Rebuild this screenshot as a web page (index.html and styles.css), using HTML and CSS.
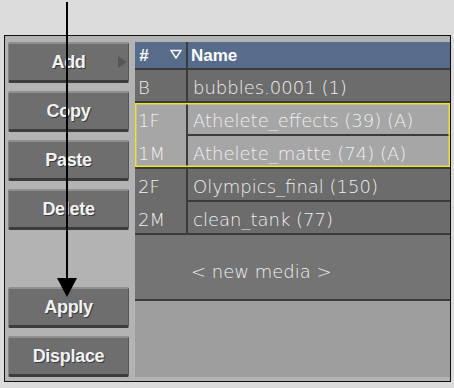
FILE: index.html
```html
<!DOCTYPE html>
<html lang="en">

<head>
    <meta charset="UTF-8">
    <meta name="viewport" content="width=device-width, initial-scale=1.0">
    <title>Media List</title>
    <link rel="stylesheet" href="styles.css">
</head>

<body>
    <div class="stage">
        <div class="panel">
            <div class="actions">
                <div class="group">
                    <button class="btn">Add<span class="more"></span></button>
                    <button class="btn">Copy</button>
                    <button class="btn">Paste</button>
                    <button class="btn">Delete</button>
                </div>
                <div class="group">
                    <button class="btn">Apply</button>
                    <button class="btn">Displace</button>
                </div>
            </div>

            <div class="media">
                <div class="head">
                    <div class="head-id">
                        <span class="hash">#</span>
                        <svg class="sort" width="12" height="10" viewBox="0 0 12 10">
                            <path d="M1 1.5 H11 L6 9 Z" fill="none" stroke="#fff" stroke-width="1.4" stroke-linejoin="miter" />
                        </svg>
                    </div>
                    <div class="head-name">Name</div>
                </div>

                <div class="clip">
                    <div class="id">B</div>
                    <div class="name">bubbles.0001 (1)</div>
                </div>

                <div class="clip selected">
                    <div class="id span">
                        <div class="line">1F</div>
                        <div class="line">1M</div>
                    </div>
                    <div class="name">Athelete_effects (39) (A)</div>
                    <div class="name">Athelete_matte (74) (A)</div>
                </div>

                <div class="clip">
                    <div class="id span">
                        <div class="line">2F</div>
                        <div class="line">2M</div>
                    </div>
                    <div class="name">Olympics_final (150)</div>
                    <div class="name">clean_tank (77)</div>
                </div>

                <div class="new-media">&lt; new media &gt;</div>
                <div class="empty"></div>
            </div>
        </div>

        <!-- pointer drawn over the buttons -->
        <svg class="pointer" width="24" height="300" viewBox="0 0 24 300">
            <rect x="10" y="2" width="2" height="280" fill="#000" />
            <polygon points="1,278 21,278 11,297" fill="#000" />
        </svg>
    </div>
</body>

</html>
```

FILE: styles.css
```css
body {
    margin: 0;
    background-color: #dcdcdc;
}

.stage {
    position: relative;
    padding: 35px 0 0 4px;
    height: 353px;
}

.panel {
    display: flex;
    width: 445px;
    height: 345px;
    border: 1px solid #111;
    background-color: #b3b3b3;
}

/* left buttons */

.actions {
    display: flex;
    flex-direction: column;
    justify-content: space-between;
    width: 127px;
    padding: 6px 0 4px 3px;
}

.group {
    display: flex;
    flex-direction: column;
    gap: 8px;
}

.btn {
    position: relative;
    box-sizing: border-box;
    width: 121px;
    height: 41px;
    padding: 0;
    border-top: 2px solid #8f8f8f;
    border-left: 1px solid #868686;
    border-right: 1px solid #555;
    border-bottom: 3px solid #3c3c3c;
    border-radius: 2px;
    background-color: #6e6e6e;
    color: #f2f2f2;
    font-family: "Liberation Sans", Arial, sans-serif;
    font-weight: bold;
    font-size: 18px;
    letter-spacing: -0.3px;
    text-shadow: 1px 1px 0 #3a3a3a;
    cursor: pointer;
}

.more {
    position: absolute;
    right: 1px;
    top: 12px;
    width: 0;
    height: 0;
    border-top: 6px solid transparent;
    border-bottom: 6px solid transparent;
    border-left: 9px solid #575757;
}

/* media list */

.media {
    flex: 1;
    display: flex;
    flex-direction: column;
    gap: 2px;
    margin: 6px 0 4px 0;
    background-color: #3b3b3b;
    font-family: "DejaVu Sans", sans-serif;
    font-weight: 200;
    font-size: 18px;
    color: #f0f0f0;
}

.head,
.clip {
    display: grid;
    grid-template-columns: 51px 1fr;
    column-gap: 2px;
    row-gap: 2px;
}

.head {
    height: 26px;
    font-family: "Liberation Sans", Arial, sans-serif;
    font-weight: bold;
    font-size: 17px;
    color: #fff;
}

.head-id,
.head-name {
    background-color: #576c8b;
    box-sizing: border-box;
    padding-top: 2px;
    line-height: 24px;
}

.head-id {
    display: flex;
    align-items: center;
    padding-left: 4px;
    padding-right: 4px;
}

.hash {
    font-style: italic;
}

.sort {
    margin-left: auto;
    margin-top: -4px;
}

.head-name {
    padding-left: 3px;
}

.clip {
    grid-auto-rows: 31px;
}

.id,
.name,
.line {
    box-sizing: border-box;
    height: 31px;
    padding-top: 4px;
    line-height: 27px;
    background-color: #6c6c6c;
    white-space: nowrap;
}

.id {
    padding-left: 3px;
}

.name {
    padding-left: 5px;
}

.id.span {
    grid-row: span 2;
    height: auto;
    padding: 0;
    display: flex;
    flex-direction: column;
    gap: 2px;
}

.line {
    padding-left: 3px;
}

.selected {
    position: relative;
}

.selected::after {
    content: "";
    position: absolute;
    top: 0;
    left: 0;
    right: 0;
    bottom: 0;
    border: 1px solid #f2e41c;
    box-shadow: inset 0 0 0 1px rgba(230, 220, 90, 0.45);
    pointer-events: none;
}

.selected .id,
.selected .name,
.selected .line {
    background-color: #a6a6a6;
}

.new-media {
    height: 64px;
    box-sizing: border-box;
    padding: 26px 0 0 56px;
    line-height: 21px;
    background-color: #747474;
}

.empty {
    flex: 1;
    background-color: #9e9e9e;
}

.pointer {
    position: absolute;
    left: 56px;
    top: 0;
}
```
